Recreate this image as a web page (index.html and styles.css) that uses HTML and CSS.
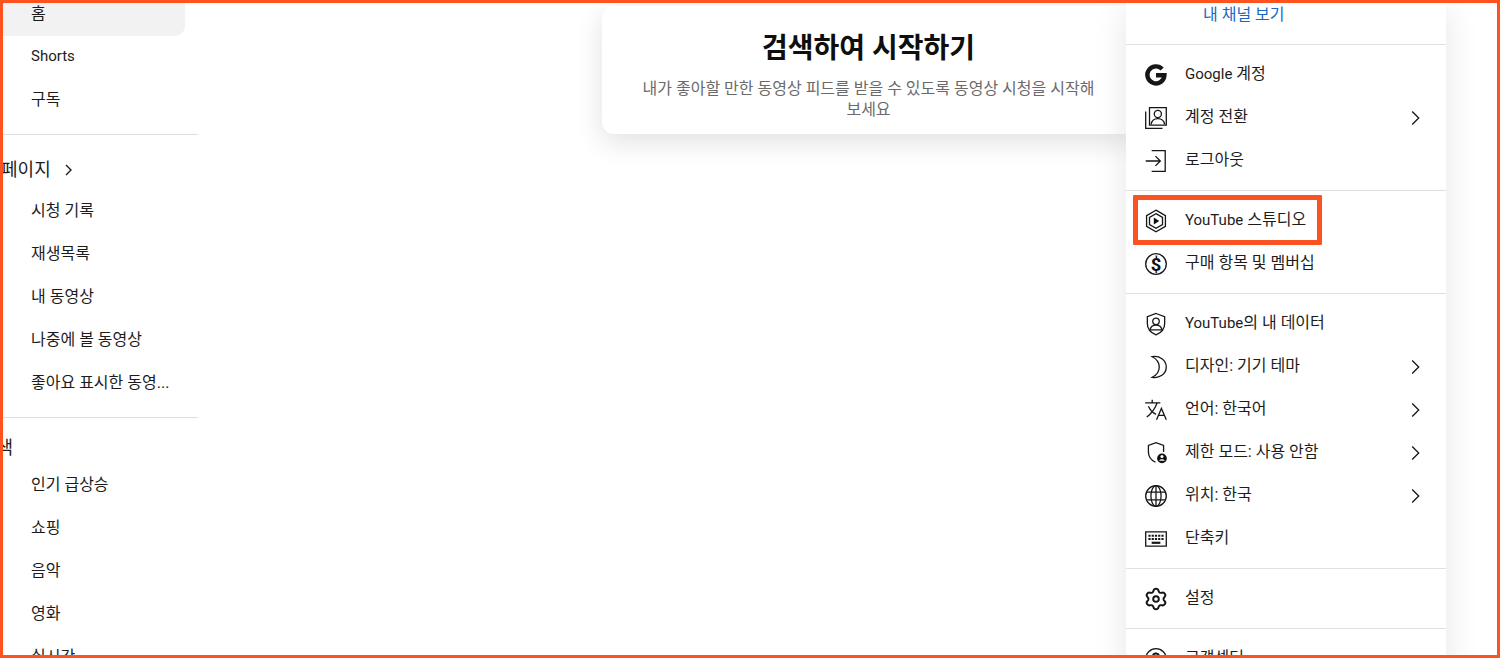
FILE: index.html
```html
<!DOCTYPE html>
<html lang="ko">
<head>
  <meta charset="UTF-8">
  <meta name="viewport" content="width=device-width, initial-scale=1.0">
  <title>YouTube</title>
  <link rel="stylesheet" href="styles.css">
</head>
<body>
  <div class="page">
    <!-- Sidebar -->
    <nav class="sidebar">
      <ul class="nav-list">
        <li><a class="nav-item active" href="#"><svg class="icon" viewBox="0 0 24 24"><path d="M4 21V10l8-7 8 7v11h-6v-6h-4v6z"/></svg>홈</a></li>
        <li><a class="nav-item" href="#"><svg class="icon" viewBox="0 0 24 24"><path d="M7 8l7-4 3 4-3 3 3 3-7 6-3-4 3-3z"/></svg><span class="latin">Shorts</span></a></li>
        <li><a class="nav-item" href="#"><svg class="icon" viewBox="0 0 24 24"><path d="M4 8.500h18.500v13H4zM6 5.500h13M8 2.500h9"/></svg>구독</a></li>
      </ul>
      <h2 class="nav-title nav-title-link"><a href="#">내 페이지<svg class="title-arrow" viewBox="0 0 16 16"><path d="M5 3l5 5-5 5"/></svg></a></h2>
      <ul class="nav-list">
        <li><a class="nav-item" href="#"><svg class="icon" viewBox="0 0 24 24"><path d="M3 12a8 8 0 1 0 3-6M3 4v4h4M12 8v5l4 2"/></svg>시청 기록</a></li>
        <li><a class="nav-item" href="#"><svg class="icon" viewBox="0 0 24 24"><path d="M3 6h17M3 11h17M3 16h9M15 14v7l5-3z"/></svg>재생목록</a></li>
        <li><a class="nav-item" href="#"><svg class="icon" viewBox="0 0 24 24"><path d="M3 4.500h19.500v15H3zM10 8v8l6-4z"/></svg>내 동영상</a></li>
        <li><a class="nav-item" href="#"><svg class="icon" viewBox="0 0 24 24"><circle cx="12" cy="12" r="10.500"/><path d="M12 6v6l4 3"/></svg>나중에 볼 동영상</a></li>
        <li><a class="nav-item" href="#"><svg class="icon" viewBox="0 0 24 24"><path d="M3 11h4v10H3zM7 11l6-8c2 0 2 2 1 7h8l-2 11H7"/></svg>좋아요 표시한 동영...</a></li>
      </ul>
      <h2 class="nav-title">탐색</h2>
      <ul class="nav-list">
        <li><a class="nav-item" href="#"><svg class="icon" viewBox="0 0 24 24"><path d="M13 3c0 5-7 6-7 12a6 6 0 0 0 12 0c0-4-4-5-5-12z"/></svg>인기 급상승</a></li>
        <li><a class="nav-item" href="#"><svg class="icon" viewBox="0 0 24 24"><path d="M4 8h16l-1 13H5zM8 8a4 4 0 0 1 8 0"/></svg>쇼핑</a></li>
        <li><a class="nav-item" href="#"><svg class="icon" viewBox="0 0 24 24"><circle cx="9" cy="17" r="4"/><path d="M13 17V3h5v4h-5"/></svg>음악</a></li>
        <li><a class="nav-item" href="#"><svg class="icon" viewBox="0 0 24 24"><path d="M3 8.500h19.500v12H3zM3 8l18-5"/></svg>영화</a></li>
        <li><a class="nav-item" href="#"><svg class="icon" viewBox="0 0 24 24"><circle cx="12" cy="12" r="2"/><path d="M8 8a6 6 0 0 0 0 8M16 8a6 6 0 0 1 0 8M5 5a10 10 0 0 0 0 14M19 5a10 10 0 0 1 0 14"/></svg>실시간</a></li>
      </ul>
    </nav>

    <!-- Empty feed message -->
    <main class="feed">
      <section class="start-card">
        <h1>검색하여 시작하기</h1>
        <p>내가 좋아할 만한 동영상 피드를 받을 수 있도록 동영상 시청을 시작해 보세요</p>
      </section>
    </main>

    <!-- Account menu -->
    <div class="menu">
      <div class="menu-header"><a href="#">내 채널 보기</a></div>
      <ul class="menu-section">
        <li><a class="menu-item" href="#">
          <svg class="icon" viewBox="0 0 24 24"><path class="g-mark" d="M17.700 6.500A7.900 7.900 0 1 0 19.800 12.200H12"/></svg>
          <span class="label"><span class="latin">Google</span> 계정</span></a></li>
        <li><a class="menu-item" href="#">
          <svg class="icon" viewBox="0 0 24 24"><path d="M2.500 6v15.500H18M6 2.500h15.500V18.500H6z"/><circle cx="13.700" cy="8.300" r="3.300"/><path d="M7.500 18c.5-4 3-5.500 6.200-5.500s5.700 1.500 6.300 5.500"/></svg>
          <span class="label">계정 전환</span>
          <svg class="icon arrow" viewBox="0 0 24 24"><path d="M8.500 6l6 6-6 6"/></svg></a></li>
        <li><a class="menu-item" href="#">
          <svg class="icon" viewBox="0 0 24 24"><path d="M8 2.500h12.500v19H8M2.500 12h13M11.500 7.500L16 12l-4.500 4.500"/></svg>
          <span class="label">로그아웃</span></a></li>
      </ul>
      <ul class="menu-section">
        <li class="highlight"><a class="menu-item" href="#">
          <svg class="icon" viewBox="0 0 24 24"><path d="M12 2l8.700 5v10L12 22l-8.700-5V7z"/><path d="M12 5.200l6 3.400v6.800l-6 3.400-6-3.400V8.600z"/><path class="solid" d="M10 8.800l5 3.200-5 3.200z"/></svg>
          <span class="label"><span class="latin">YouTube</span> 스튜디오</span></a></li>
        <li><a class="menu-item" href="#">
          <svg class="icon" viewBox="0 0 24 24"><circle cx="12" cy="12" r="9.500"/><text class="coin" x="12" y="18">$</text></svg>
          <span class="label">구매 항목 및 멤버십</span></a></li>
      </ul>
      <ul class="menu-section">
        <li><a class="menu-item" href="#">
          <svg class="icon" viewBox="0 0 24 24"><path d="M12 2.300l8 3v6.200c0 5-3 8.500-8 10.500-5-2-8-5.500-8-10.500V5.300z"/><circle cx="12" cy="9.500" r="3"/><path d="M6.500 17.500c.5-3 2.500-4.500 5.500-4.500s5 1.500 5.500 4.500z"/></svg>
          <span class="label"><span class="latin">YouTube</span>의 내 데이터</span></a></li>
        <li><a class="menu-item" href="#">
          <svg class="icon" viewBox="0 0 24 24"><path d="M8.500 2.500C15 1.200 21.500 5.500 21.500 12S15 22.800 8.500 21.500C12.500 19.500 15 16.500 15 12S12.500 4.500 8.500 2.500z"/></svg>
          <span class="label">디자인: 기기 테마</span>
          <svg class="icon arrow" viewBox="0 0 24 24"><path d="M8.500 6l6 6-6 6"/></svg></a></li>
        <li><a class="menu-item" href="#">
          <svg class="icon" viewBox="0 0 24 24"><path d="M2 5.500h14M8.500 2.500v3M13 5.500C11 11 8 15 3.500 18.500M5 8.500c1.500 3.500 4 6 7 7.500M12.500 21L17 10.500 21.500 21M14 17h6"/></svg>
          <span class="label">언어: 한국어</span>
          <svg class="icon arrow" viewBox="0 0 24 24"><path d="M8.500 6l6 6-6 6"/></svg></a></li>
        <li><a class="menu-item" href="#">
          <svg class="icon" viewBox="0 0 24 24"><path d="M11.500 20.500c-4-2-6.500-5-6.500-9.500V5l7-2.500L19 5v6"/><circle class="solid" cx="17.500" cy="17" r="4.500"/><circle class="cutout" cx="17.500" cy="15.300" r="1.400"/><path class="cutout" d="M14.800 19.200c.5-2 4.900-2 5.400 0z"/></svg>
          <span class="label">제한 모드: 사용 안함</span>
          <svg class="icon arrow" viewBox="0 0 24 24"><path d="M8.500 6l6 6-6 6"/></svg></a></li>
        <li><a class="menu-item" href="#">
          <svg class="icon" viewBox="0 0 24 24"><circle cx="12" cy="12" r="9.500"/><ellipse cx="12" cy="12" rx="4.700" ry="9.500"/><path d="M12 2.500v19M3.500 8.500h17M3.500 15.500h17"/></svg>
          <span class="label">위치: 한국</span>
          <svg class="icon arrow" viewBox="0 0 24 24"><path d="M8.500 6l6 6-6 6"/></svg></a></li>
        <li><a class="menu-item" href="#">
          <svg class="icon" viewBox="0 0 24 24"><path d="M2.500 5.500h19v13h-19z"/><path class="keys" d="M5 9h14M5 12h14"/><path class="space-key" d="M8 15.500h8"/></svg>
          <span class="label">단축키</span></a></li>
      </ul>
      <ul class="menu-section">
        <li><a class="menu-item" href="#">
          <svg class="icon" viewBox="0 0 24 24"><path class="gear" d="M12 2.500C13.500 2.500 14 3 14.300 4.300 14.700 6 16 6.700 17.600 6.200 18.900 5.800 19.500 6.100 20.200 7.300 21 8.500 20.900 9.200 19.900 10.100 18.600 11.300 18.600 12.700 19.900 13.900 20.900 14.800 21 15.500 20.200 16.700 19.500 17.900 18.900 18.200 17.600 17.800 16 17.300 14.700 18 14.300 19.700 14 21 13.500 21.500 12 21.500S10 21 9.700 19.700C9.300 18 8 17.300 6.400 17.800 5.100 18.200 4.500 17.900 3.800 16.700 3 15.500 3.100 14.800 4.100 13.900 5.400 12.700 5.400 11.300 4.100 10.100 3.100 9.200 3 8.500 3.800 7.300 4.500 6.100 5.100 5.800 6.400 6.200 8 6.700 9.300 6 9.700 4.300 10 3 10.500 2.500 12 2.500z"/><circle class="gear" cx="12" cy="12" r="2.600"/></svg>
          <span class="label">설정</span></a></li>
      </ul>
      <ul class="menu-section">
        <li><a class="menu-item" href="#">
          <svg class="icon" viewBox="0 0 24 24"><circle cx="12" cy="12" r="9.500"/><path class="question" d="M9 10a3 3 0 1 1 4.500 2.500c-1 .7-1.500 1-1.500 2.500M12 17v1"/></svg>
          <span class="label">고객센터</span></a></li>
      </ul>
    </div>
  </div>
</body>
</html>
```
FILE: styles.css
```css
* {
  box-sizing: border-box;
}
body {
  margin: 0;
  font-family: Roboto, "Noto Sans CJK KR", sans-serif;
  font-size: 16px;
  line-height: 21px;
  color: #1c1c1c;
  background-color: #fff;
}
a {
  color: inherit;
  text-decoration: none;
}
ul {
  list-style: none;
  margin: 0;
  padding: 0;
}
.page {
  position: relative;
  display: flex;
  height: 100vh;
  overflow: hidden;
  border: 3px solid #ff531f;
}
.latin {
  font-size: 15px;
}
.icon {
  flex: none;
  width: 26px;
  height: 26px;
  fill: none;
  stroke: #161616;
  stroke-width: 1.2;
}

/* Sidebar */
.sidebar {
  flex: none;
  width: 260px;
  margin: -10px 0 0 -23px;
}
.sidebar .icon {
  width: 24px;
  height: 24px;
  stroke: #555;
  stroke-width: 1;
}
.nav-list {
  width: 218px;
  padding-bottom: 12px;
  border-bottom: 1px solid #e0e0e0;
}
.nav-item {
  display: flex;
  align-items: center;
  gap: 27px;
  height: 43px;
  margin-right: 13px;
  padding-bottom: 2px;
  white-space: nowrap;
}
.nav-item.active {
  background-color: #f2f2f2;
  border-radius: 10px;
}
.nav-title {
  margin: 14px 0 0;
  font-size: 18px;
  font-weight: 400;
  line-height: 32px;
}
.nav-title-link {
  line-height: 41px;
}
.nav-title a {
  display: flex;
  align-items: center;
  gap: 10px;
}
.title-arrow {
  width: 16px;
  height: 16px;
  fill: none;
  stroke: #1c1c1c;
  stroke-width: 1.4;
}

/* Feed */
.feed {
  flex: 1;
  padding-top: 3px;
}
.start-card {
  max-width: 533px;
  margin: 0 auto;
  padding: 26px 32px 14px;
  text-align: center;
  border-radius: 12px;
  box-shadow: 0 8px 28px rgba(0, 0, 0, 0.12);
}
.start-card h1 {
  margin: 0 0 12px;
  font-size: 28px;
  font-weight: 700;
  line-height: 34px;
  color: #0f0f0f;
}
.start-card p {
  margin: 0;
  color: #6a6a6a;
  word-break: break-all;
}

/* Account menu */
.menu {
  position: absolute;
  top: 0;
  right: 51px;
  width: 320px;
  background-color: #fff;
  box-shadow: 0 4px 32px rgba(0, 0, 0, 0.1);
}
.menu-header {
  padding: 1px 77px 19px;
  color: #1a68c4;
}
.menu-section {
  padding: 8px 0;
  border-top: 1px solid #e0e0e0;
}
.menu-item {
  display: flex;
  align-items: center;
  gap: 16px;
  height: 43px;
  padding: 0 17px;
}
.label {
  flex: 1;
  padding-bottom: 2px;
}
.highlight {
  position: relative;
}
.highlight::after {
  content: "";
  position: absolute;
  box-sizing: border-box;
  top: -4px;
  left: 7px;
  width: 189px;
  height: 50px;
  border: 5px solid #fa5220;
  border-radius: 1px;
  pointer-events: none;
}

/* Icon details */
.icon .g-mark {
  stroke-width: 4;
}
.icon .gear,
.icon .question {
  stroke-width: 1.8;
  stroke-linejoin: round;
}
.icon .solid {
  fill: #0f0f0f;
  stroke: none;
}
.icon .cutout {
  fill: #fff;
  stroke: none;
}
.icon .coin {
  fill: #0f0f0f;
  stroke: none;
  font-size: 17px;
  font-weight: 700;
  text-anchor: middle;
}
.icon .keys {
  stroke-width: 2;
  stroke-dasharray: 2 1;
}
.icon .space-key {
  stroke-width: 2;
}
```
